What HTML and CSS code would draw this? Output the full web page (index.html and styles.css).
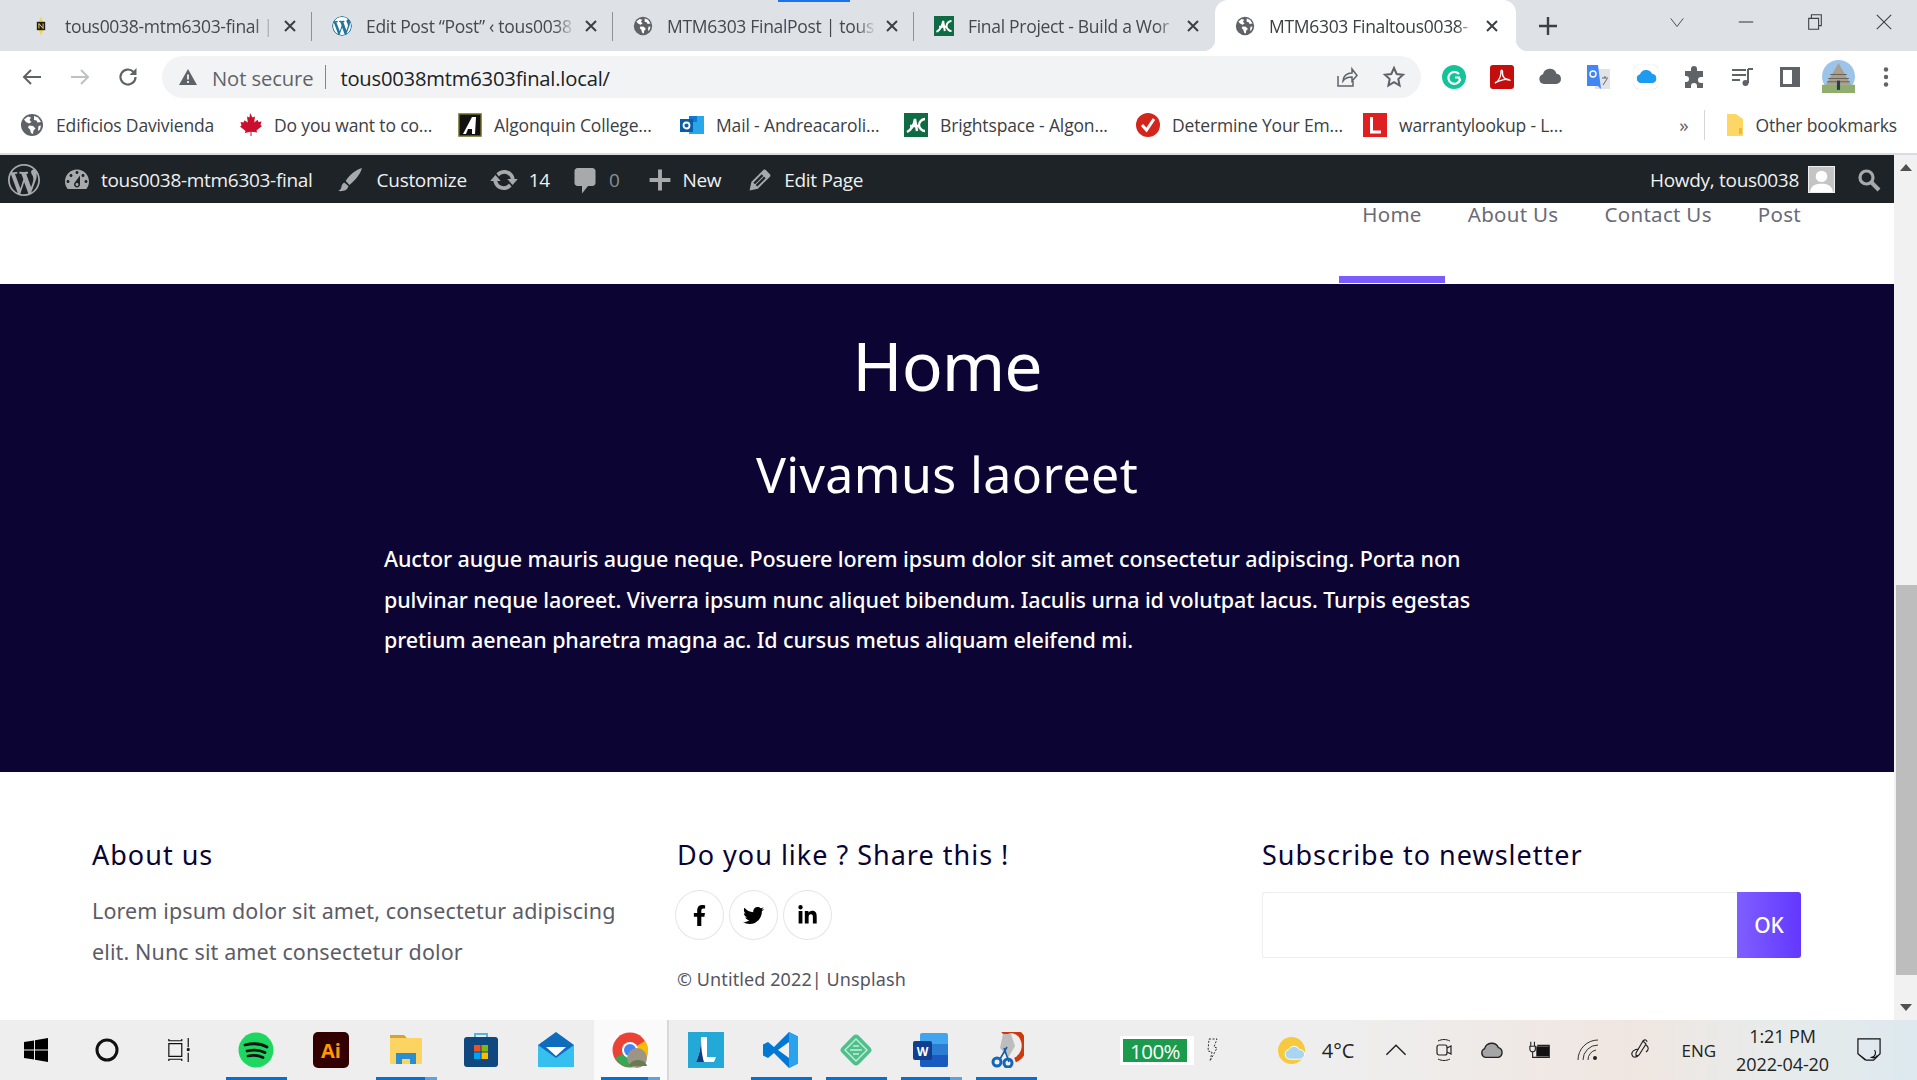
FILE: index.html
```html
<!DOCTYPE html>
<html lang="en">
<head>
<meta charset="utf-8">
<title>MTM6303 Final</title>
<link rel="stylesheet" href="styles.css">
</head>
<body>
<svg class="defs" aria-hidden="true">
  <symbol id="globe" viewBox="0 0 24 24"><circle cx="12" cy="12" r="11" fill="#5f6368"/><path fill="#fff" d="M4 6.500 8 3.500l3 1-1.500 2.500 2 2-2.500 1.500-3-1.500zM9 12.500l4 .5 2.500 2.500-2 2-.5 3.500-2-1-1-3.500-2-2zM14 3l4 1.500 3 4.500-3.500.5-1-2-2.500-.5zM18.500 13l2.500-.5-1 4-2 1.500z"/></symbol>
  <symbol id="close" viewBox="0 0 14 14"><path d="M2 2l10 10M12 2 2 12" fill="none" stroke="#3c4043" stroke-width="2"/></symbol>
  <symbol id="wp" viewBox="0 0 20 20"><path d="M20 10c0-5.510-4.490-10-10-10C4.480 0 0 4.490 0 10c0 5.520 4.480 10 10 10 5.510 0 10-4.480 10-10zM7.780 15.370L4.370 6.220c.55-.02 1.170-.08 1.170-.08.5-.06.44-1.130-.06-1.110 0 0-1.450.11-2.370.11-.18 0-.37 0-.58-.01C4.120 2.690 6.870 1.110 10 1.110c2.330 0 4.450.87 6.050 2.340-.68-.11-1.650.39-1.650 1.580 0 .74.45 1.360.9 2.100.35.61.55 1.360.55 2.460 0 1.490-1.400 5-1.400 5l-3.030-8.370c.54-.02.82-.17.82-.17.5-.05.44-1.250-.06-1.220 0 0-1.440.12-2.380.12-.87 0-2.330-.12-2.330-.12-.5-.03-.56 1.200-.06 1.220l.92.08 1.260 3.410zM17.410 10c.24-.64.74-1.870.43-4.250.7 1.290 1.050 2.710 1.050 4.250 0 3.290-1.730 6.240-4.400 7.780.97-2.590 1.940-5.200 2.920-7.780zM6.100 18.090C3.120 16.650 1.110 13.530 1.110 10c0-1.300.23-2.480.72-3.590C3.250 10.300 4.670 14.200 6.100 18.090zm4.030-6.630l2.580 6.980c-.86.29-1.760.45-2.710.45-.79 0-1.570-.11-2.290-.33.81-2.380 1.620-4.740 2.420-7.100z"/></symbol>
  <symbol id="ac" viewBox="0 0 24 24"><rect width="24" height="24" fill="#0f6b43"/><path fill="none" stroke="#fff" stroke-width="2.400" d="M3 19c4-2 7-7 8-13l2 12M6 13h9M21 6c-3 0-6 3-6 6s3 6 6 6"/></symbol>
</svg>
<div class="screen">
  <header class="tabstrip">
    <span class="tab-loading"></span>
    <div class="tab">
      <svg class="fav" viewBox="0 0 24 24"><path fill="#f5d547" d="M12 1l5 11-5 11-5-11z"/><rect x="7" y="7" width="10" height="10" fill="#1c1c1c"/><path d="M9.500 9v6M14.500 9v6M9.500 9l5 6" stroke="#f5d547" stroke-width="1.200" fill="none"/></svg>
      <span class="tab-title">tous0038-mtm6303-final |</span>
      <svg class="tab-x"><use href="#close"/></svg>
    </div>
    <div class="tab">
      <svg class="fav fav-wp" viewBox="0 0 20 20"><use href="#wp"/></svg>
      <span class="tab-title">Edit Post “Post” ‹ tous0038</span>
      <svg class="tab-x"><use href="#close"/></svg>
    </div>
    <div class="tab">
      <svg class="fav"><use href="#globe"/></svg>
      <span class="tab-title">MTM6303 FinalPost | tous</span>
      <svg class="tab-x"><use href="#close"/></svg>
    </div>
    <div class="tab tab-last">
      <svg class="fav"><use href="#ac"/></svg>
      <span class="tab-title">Final Project - Build a Wor</span>
      <svg class="tab-x"><use href="#close"/></svg>
    </div>
    <div class="tab tab-active">
      <svg class="fav"><use href="#globe"/></svg>
      <span class="tab-title">MTM6303 Finaltous0038-</span>
      <svg class="tab-x"><use href="#close"/></svg>
    </div>
    <svg class="new-tab" viewBox="0 0 20 20"><path d="M10 1v18M1 10h18" stroke="#3c4043" stroke-width="2.400" fill="none"/></svg>
    <div class="win-controls">
      <svg viewBox="0 0 20 20"><path d="M3 6l7 9 7-9" fill="none" stroke="#3c4043"/></svg>
      <svg viewBox="0 0 20 20"><path d="M2 10h16" fill="none" stroke="#3c4043" stroke-width="1.200"/></svg>
      <svg viewBox="0 0 20 20"><path d="M3 6h11v12H3zM6 6V2h11v12h-3" fill="none" stroke="#3c4043" stroke-width="1.200"/></svg>
      <svg viewBox="0 0 20 20"><path d="M2 2l16 16M18 2 2 18" fill="none" stroke="#3c4043" stroke-width="1.200"/></svg>
    </div>
  </header>

  <nav class="toolbar">
    <div class="nav-btns">
      <svg viewBox="0 0 24 24"><path d="M21 12H4M11 5l-7 7 7 7" fill="none" stroke="#5f6368" stroke-width="2"/></svg>
      <svg viewBox="0 0 24 24"><path d="M3 12h17M13 5l7 7-7 7" fill="none" stroke="#bdc1c6" stroke-width="2"/></svg>
      <svg viewBox="0 0 24 24"><path d="M19.500 12a7.500 7.500 0 1 1-2.200-5.300" fill="none" stroke="#5f6368" stroke-width="2.200"/><path d="M20.500 3v7h-7z" fill="#5f6368"/></svg>
    </div>
    <div class="omnibox">
      <svg class="warn" viewBox="0 0 20 20"><path d="M10 2 19 18H1z" fill="#5f6368"/><path d="M10 7.500v5M10 14v2" stroke="#f1f3f4" stroke-width="1.800"/></svg>
      <span class="not-secure">Not secure</span>
      <span class="omni-sep"></span>
      <span class="url">tous0038mtm6303final.local/</span>
      <svg class="omni-icon share" viewBox="0 0 24 24"><path d="M4 11v10h15v-5M9 16c0-5 4-8 9-8V4l5 6.500L18 16v-4c-4 0-7 1-9 4z" fill="none" stroke="#5f6368" stroke-width="1.500"/></svg>
      <svg class="omni-icon star" viewBox="0 0 24 24"><path d="M12 3l2.700 6 6.300.7-4.700 4.300 1.300 6.500L12 17.200 6.400 20.500l1.300-6.500L3 9.700 9.300 9z" fill="none" stroke="#5f6368" stroke-width="2"/></svg>
    </div>
    <div class="ext-row">
      <span class="ext"><svg viewBox="0 0 24 24"><circle cx="12" cy="12" r="12" fill="#15c39a"/><path d="M17 9a6 6 0 1 0 1 6l-1-2.500h-4" fill="none" stroke="#fff" stroke-width="2.200"/></svg></span>
      <span class="ext"><svg viewBox="0 0 24 24"><rect width="24" height="24" rx="3" fill="#c40e0e"/><path d="M5 18c4-2 6-7 6-11 0-3 2-2 1.500 1-.5 4 3 7 7 7 0 0-1.500-1.500-5-.5-3 .8-6 1.500-9.500 3.500z" fill="none" stroke="#fff" stroke-width="1.400"/></svg></span>
      <span class="ext"><svg viewBox="0 0 24 24"><path d="M6 19a5 5 0 0 1-1-9.800 7 7 0 0 1 13.500-.5A5.200 5.200 0 0 1 18.500 19z" fill="#5f6368"/></svg></span>
      <span class="ext"><svg viewBox="0 0 24 24"><rect x="9" y="4" width="15" height="20" fill="#e1e3e6"/><path d="M1 0h11l3 24-3-3H1z" fill="#4285f4"/><circle cx="7" cy="9" r="3" fill="none" stroke="#fff" stroke-width="1.400"/><path d="M16 13h6M19 11v2M17 20l4-6" stroke="#5f6368" fill="none"/></svg></span>
      <span class="ext ext-icloud"><svg viewBox="0 0 24 24"><path d="M7 18a4.500 4.500 0 0 1-1-8.800 6.500 6.500 0 0 1 12-.5 4.700 4.700 0 0 1 .5 9.300z" fill="#1d9bf0"/></svg></span>
      <span class="ext"><svg viewBox="0 0 24 24"><path d="M9 4a3 3 0 0 1 6 0v2h6v6h-2a3 3 0 0 0 0 6h2v5h-6v-2a3 3 0 0 0-6 0v2H3v-6h1a3 3 0 0 0 0-6H3V6h6z" fill="#5f6368"/></svg></span>
      <span class="ext"><svg viewBox="0 0 24 24"><path d="M2 5h14M2 10h14M2 15h8" stroke="#5f6368" stroke-width="2" fill="none"/><path d="M18 4h5M18 4v14" stroke="#5f6368" stroke-width="2" fill="none"/><circle cx="15.500" cy="18" r="3" fill="#5f6368"/></svg></span>
      <span class="ext"><svg viewBox="0 0 24 24"><path d="M2 2h20v20H2z" fill="#5f6368"/><rect x="5" y="5" width="9" height="14" fill="#fff"/></svg></span>
      <span class="ext"><svg class="avatar" viewBox="0 0 32 32"><circle cx="16" cy="16" r="16" fill="#9cc4e8"/><path d="M0 24h32v8H0z" fill="#8fae6b"/><path d="M16 3 28 24H4z" fill="#a8a08e"/><path d="M8 14h16M6 18h20M5 21h22" stroke="#6b6455"/><rect x="14.500" y="20" width="3" height="9" fill="#2b3a55"/></svg></span>
      <span class="ext"><svg viewBox="0 0 24 24"><circle cx="12" cy="4.500" r="2.200" fill="#5f6368"/><circle cx="12" cy="12" r="2.200" fill="#5f6368"/><circle cx="12" cy="19.500" r="2.200" fill="#5f6368"/></svg></span>
    </div>
  </nav>

  <div class="bookmarks">
    <div class="bm-list">
      <div class="bm"><svg><use href="#globe"/></svg><span>Edificios Davivienda</span></div>
      <div class="bm"><svg viewBox="0 0 24 24"><path fill="#c8102e" d="M12 0l2.500 4.500 2.500-1-.8 6 3.300-2.800 1 2.300 3-.5-1 3.500 1.500 1-5.500 4.500.7 2-5.700-.8v4.300h-1v-4.300L6.800 20l.7-2L2 13.500l1.500-1-1-3.500 3 .5 1-2.300L9.800 9.500 9 3.500l2.500 1z"/></svg><span>Do you want to co...</span></div>
      <div class="bm"><svg viewBox="0 0 24 24"><rect x="1" y="1" width="22" height="22" fill="#111" stroke="#6b6b1e" stroke-width="1.500"/><path d="M5 21 14 4h4l-1 17h-3v-5h-4l-2 5z" fill="#fff"/></svg><span>Algonquin College...</span></div>
      <div class="bm"><svg viewBox="0 0 24 24"><rect x="9" y="3" width="15" height="18" fill="#28a8ea"/><rect x="9" y="3" width="8" height="6" fill="#0f78d4"/><rect x="0" y="6" width="13" height="13" fill="#0a5ea8"/><circle cx="6.500" cy="12.500" r="3" fill="none" stroke="#fff" stroke-width="1.800"/></svg><span>Mail - Andreacaroli...</span></div>
      <div class="bm"><svg><use href="#ac"/></svg><span>Brightspace - Algon...</span></div>
      <div class="bm"><svg viewBox="0 0 24 24"><circle cx="12" cy="12" r="12" fill="#d2261c"/><path d="M6 12l4.500 5L18 6" fill="none" stroke="#fff" stroke-width="3"/></svg><span>Determine Your Em...</span></div>
      <div class="bm"><svg viewBox="0 0 24 24"><rect width="24" height="24" fill="#e02020"/><path d="M8.500 4v15H18" fill="none" stroke="#fff" stroke-width="3"/></svg><span>warrantylookup - L...</span></div>
    </div>
    <div class="bm-more">
      <span class="chev">»</span>
      <span class="bm-sep"></span>
      <div class="bm"><svg class="bm-folder" viewBox="0 0 18 24"><path d="M1 1h9l7 5v17H1z" fill="#fdd663"/><rect x="13" y="15" width="3" height="6" fill="#e6b93f"/></svg><span>Other bookmarks</span></div>
    </div>
  </div>

  <div class="viewport">
    <div class="page">
      <div class="adminbar">
        <div class="ab-group">
          <svg class="ab-icon ab-wp" viewBox="0 0 20 20"><use href="#wp"/></svg>
          <span class="ab-item">
            <svg class="ab-icon" viewBox="0 0 20 20"><path d="M3.760 16h12.480c1.100-1.370 1.760-3.110 1.760-5 0-4.420-3.580-8-8-8s-8 3.580-8 8c0 1.890.66 3.630 1.760 5zM10 4c.55 0 1 .45 1 1s-.45 1-1 1-1-.45-1-1 .45-1 1-1zM6 6c.55 0 1 .45 1 1s-.45 1-1 1-1-.45-1-1 .45-1 1-1zm8 0c.55 0 1 .45 1 1s-.45 1-1 1-1-.45-1-1 .45-1 1-1zm-5.370 5.550L12 7v6c0 1.100-.9 2-2 2s-2-.9-2-2c0-.57.24-1.080.63-1.450zM4 10c.55 0 1 .45 1 1s-.45 1-1 1-1-.45-1-1 .45-1 1-1zm12 0c.55 0 1 .45 1 1s-.45 1-1 1-1-.45-1-1 .45-1 1-1zm-5 3c0-.55-.45-1-1-1s-1 .45-1 1 .45 1 1 1 1-.45 1-1z"/></svg>
            tous0038-mtm6303-final
          </span>
          <span class="ab-item ab-customize">
            <svg class="ab-icon ab-small" viewBox="0 0 24 24"><path d="M23 1c-5 1-12 7-15 12l3.500 3.500C16.500 13 22 6 23 1zM7 14.500c-3 .5-2.500 4-3.500 5.500-.5.8-1.500 1.500-2.500 2 4 1 9-.5 9.500-4.500z"/></svg>
            Customize
          </span>
          <span class="ab-item ab-updates">
            <svg class="ab-icon" viewBox="0 0 20 20"><path d="M10.200 3.280c3.530 0 6.430 2.610 6.920 6h2.080l-3.500 4-3.500-4h2.320c-.45-1.970-2.210-3.450-4.320-3.450-1.450 0-2.730.71-3.540 1.780L4.950 5.660C6.230 4.200 8.110 3.280 10.200 3.280zm-.4 13.440c-3.520 0-6.430-2.610-6.920-6H.8l3.500-4c1.170 1.330 2.330 2.670 3.500 4H5.480c.45 1.970 2.210 3.450 4.320 3.450 1.450 0 2.730-.71 3.540-1.780l1.710 1.950c-1.280 1.460-3.150 2.380-5.250 2.380z"/></svg>
            14
          </span>
          <span class="ab-item ab-muted">
            <svg class="ab-icon" viewBox="0 0 20 20"><path d="M5 2h10c1.100 0 2 .9 2 2v8c0 1.100-.9 2-2 2h-3l-4 5v-5H5c-1.100 0-2-.9-2-2V4c0-1.100.9-2 2-2z"/></svg>
            0
          </span>
          <span class="ab-item">
            <svg class="ab-icon ab-small" viewBox="0 0 20 20"><path d="M18 8.500v3h-6.500V18h-3v-6.500H2v-3h6.500V2h3v6.500z"/></svg>
            New
          </span>
          <span class="ab-item">
            <svg class="ab-icon" viewBox="0 0 20 20"><path d="M13.890 3.390l2.710 2.720c.46.46.42 1.240.03 1.640l-8.010 8.020-5.560 1.160 1.160-5.580s7.600-7.630 7.990-8.030c.39-.39 1.220-.39 1.680.07zm-2.730 2.790l-5.590 5.610 1.110 1.110 5.540-5.650zm-2.970 8.230l5.580-5.600-1.070-1.080-5.590 5.600z"/></svg>
            Edit Page
          </span>
        </div>
        <div class="ab-right">
          <span>Howdy, tous0038</span>
          <svg class="ab-avatar" viewBox="0 0 26 26"><rect x=".5" y=".5" width="25" height="25" fill="#c4c4c4" stroke="#eee"/><circle cx="13" cy="10" r="5.500" fill="#fff"/><path d="M2 25c1-7 6-8 11-8s10 1 11 8z" fill="#fff"/></svg>
          <svg class="ab-search" viewBox="0 0 24 24"><circle cx="9.500" cy="9.500" r="6.500" fill="none" stroke="#a7aaad" stroke-width="3.200"/><path d="M14.500 14.500 22 22" stroke="#a7aaad" stroke-width="4"/></svg>
        </div>
      </div>

      <div class="sitenav">
        <a class="nav-link nav-current">Home</a>
        <a class="nav-link">About Us</a>
        <a class="nav-link">Contact Us</a>
        <a class="nav-link">Post</a>
      </div>

      <section class="hero">
        <h1>Home</h1>
        <h2>Vivamus laoreet</h2>
        <p>Auctor augue mauris augue neque. Posuere lorem ipsum dolor sit amet consectetur adipiscing. Porta non<br>pulvinar neque laoreet. Viverra ipsum nunc aliquet bibendum. Iaculis urna id volutpat lacus. Turpis egestas<br>pretium aenean pharetra magna ac. Id cursus metus aliquam eleifend mi.</p>
      </section>

      <footer class="footer">
        <div class="fcol">
          <h3>About us</h3>
          <p class="flead">Lorem ipsum dolor sit amet, consectetur adipiscing elit. Nunc sit amet consectetur dolor</p>
        </div>
        <div class="fcol">
          <h3>Do you like ? Share this !</h3>
          <div class="socials">
            <span class="social"><svg viewBox="0 0 320 512"><path d="M279.140 288l14.220-92.660h-88.910v-60.130c0-25.350 12.420-50.060 52.240-50.060h40.420V6.260S260.430 0 225.360 0c-73.220 0-121.080 44.380-121.080 124.720v70.620H22.890V288h81.390v224h100.170V288z"/></svg></span>
            <span class="social"><svg viewBox="0 0 512 512"><path d="M459.370 151.716c.325 4.548.325 9.097.325 13.645 0 138.720-105.583 298.558-298.558 298.558-59.452 0-114.680-17.219-161.137-47.106 8.447.974 16.568 1.299 25.340 1.299 49.055 0 94.213-16.568 130.274-44.832-46.132-.975-84.792-31.188-98.112-72.772 6.498.974 12.995 1.624 19.818 1.624 9.421 0 18.843-1.300 27.614-3.573-48.081-9.747-84.143-51.980-84.143-102.985v-1.299c13.969 7.797 30.214 12.670 47.431 13.319-28.264-18.843-46.781-51.005-46.781-87.391 0-19.492 5.197-37.360 14.294-52.954 51.655 63.675 129.300 105.258 216.365 109.807-1.624-7.797-2.599-15.918-2.599-24.040 0-57.828 46.782-104.934 104.934-104.934 30.213 0 57.502 12.670 76.670 33.137 23.715-4.548 46.456-13.320 66.599-25.340-7.798 24.366-24.366 44.833-46.132 57.827 21.117-2.273 41.584-8.122 60.426-16.243-14.292 20.791-32.161 39.308-52.628 54.253z"/></svg></span>
            <span class="social"><svg viewBox="0 0 448 512"><path d="M100.280 448H7.400V148.900h92.880zM53.790 108.100C24.090 108.100 0 83.500 0 53.800a53.790 53.790 0 0 1 107.580 0c0 29.700-24.100 54.300-53.790 54.300zM447.900 448h-92.680V302.400c0-34.700-.7-79.200-48.290-79.200-48.290 0-55.690 37.700-55.690 76.700V448h-92.780V148.900h89.080v40.800h1.300c12.400-23.500 42.690-48.300 87.880-48.300 94 0 111.280 61.900 111.280 142.300V448z"/></svg></span>
          </div>
          <p class="copyright">© Untitled 2022| Unsplash</p>
        </div>
        <div class="fcol">
          <h3>Subscribe to newsletter</h3>
          <form class="subscribe">
            <input class="sub-input" type="text" aria-label="Email">
            <button class="sub-btn" type="button">OK</button>
          </form>
        </div>
      </footer>
    </div>
    <div class="scrollbar">
      <span class="sb-btn"><i class="sb-up"></i></span>
      <span class="sb-track"></span>
      <span class="sb-thumb"></span>
      <span class="sb-gap"></span>
      <span class="sb-btn"><i class="sb-down"></i></span>
    </div>
  </div>

  <div class="taskbar">
    <div class="tb-start">
      <span class="tb-sys"><svg viewBox="0 0 24 24"><path d="M0 4l10-1.500V11.500H0zM11 2.300 24 0v11.500H11zM0 12.500h10v9L0 20zM11 12.500h13V24l-13-2.300z" fill="#000"/></svg></span>
      <span class="tb-sys"><svg viewBox="0 0 24 24"><circle cx="12" cy="12" r="10" fill="none" stroke="#111" stroke-width="3"/></svg></span>
      <span class="tb-sys"><svg viewBox="0 0 26 26"><path d="M2 1v2h14V1M2 6h14v14H2zM2 25v-2h14v2M23 0v10M23 16v10" fill="none" stroke="#111" stroke-width="1.300"/><rect x="21.500" y="11" width="3" height="3" fill="#111"/></svg></span>
    </div>
    <div class="tb-apps">
      <span class="tb-app tb-open"><svg viewBox="0 0 36 36"><ellipse cx="18" cy="18" rx="17.500" ry="17.500" fill="#1ed760"/><path d="M7 13c8-2 15-2 22 2M9 19c6-1.500 12-1.500 18 1.500M10 24c5-1 10-1 15 1.500" fill="none" stroke="#111" stroke-width="2.800" stroke-linecap="round"/></svg></span>
      <span class="tb-app"><svg viewBox="0 0 36 36"><rect width="36" height="36" rx="5" fill="#330000"/><text class="ai-txt" x="18" y="26">Ai</text></svg></span>
      <span class="tb-app tb-open tb-multi"><svg viewBox="0 0 36 36"><path d="M2 3h14l3 3h-17z" fill="#d8a22c"/><rect x="2" y="6" width="32" height="26" rx="1" fill="#fcd462"/><path d="M8 32V21h20v11h-6v-5h-8v5z" fill="#2a8ed0"/></svg></span>
      <span class="tb-app"><svg viewBox="0 0 36 36"><path d="M12 6V2h12v4" fill="none" stroke="#4fb6e6" stroke-width="2"/><rect x="1" y="5" width="34" height="30" rx="3" fill="#11477f"/><rect x="11" y="13" width="6.500" height="6.500" fill="#f25022"/><rect x="18.500" y="13" width="6.500" height="6.500" fill="#7fba00"/><rect x="11" y="20.500" width="6.500" height="6.500" fill="#00a4ef"/><rect x="18.500" y="20.500" width="6.500" height="6.500" fill="#ffb900"/></svg></span>
      <span class="tb-app"><svg viewBox="0 0 36 36"><path d="M0 13 18 0l18 13v22H0z" fill="#0f6cbd"/><path d="M0 13l18 13 18-13v22H0z" fill="#35c0f0"/><path d="M8 15h20l-10 9z" fill="#fff"/></svg></span>
      <span class="tb-app tb-open tb-multi tb-chrome"><svg viewBox="0 0 36 36"><circle cx="18" cy="18" r="17.500" fill="#ea4335"/><path d="M18 18 33 26a17 17 0 0 1-30 0z" fill="#34a853"/><path d="M18 18 33 9a17 17 0 0 1-2 22z" fill="#fbbc05"/><circle cx="18" cy="18" r="8" fill="#fff"/><circle cx="18" cy="18" r="6" fill="#4285f4"/><circle cx="25" cy="26" r="10" fill="#9c9484"/><path d="M17 34c2-8 16-8 18 0z" fill="#6b7b50"/></svg></span>
      <span class="tb-app"><svg viewBox="0 0 36 36"><rect width="36" height="36" fill="#23a9d8"/><path d="M13 5h6v20h9l-2 5H8c3-6 5-14 5-25z" fill="#fff"/><path d="M13 5c0 11-2 19-5 25h8c-2-6-3-14-3-25z" fill="#123b80"/></svg></span>
      <span class="tb-app tb-open"><svg viewBox="0 0 36 36"><path d="M26 0l9 4.500v27L26 36 11 21l-6 5-5-2.500V12.500L5 10l6 5z" fill="#0078d4"/><path d="M26 0l9 4.500v27L26 36z" fill="#2aa3ef"/><path d="M26 10 15 18l11 8z" fill="#f0f0f0"/></svg></span>
      <span class="tb-app tb-open"><svg viewBox="0 0 36 36"><rect x="6" y="6" width="24" height="24" rx="4" transform="rotate(45 18 18)" fill="#4fbf8b"/><path d="M18 7 29 18 18 29 7 18z M12 18h12M15 14l6 0M15 22h6" fill="none" stroke="#c4efd9" stroke-width="1.400"/></svg></span>
      <span class="tb-app tb-open tb-multi"><svg viewBox="0 0 36 36"><rect x="7" y="1" width="28" height="34" rx="2" fill="#41a5ee"/><rect x="7" y="12" width="28" height="11" fill="#2b7cd3"/><path d="M7 23h28v10a2 2 0 0 1-2 2H9a2 2 0 0 1-2-2z" fill="#185abd"/><rect y="9" width="19" height="19" rx="2" fill="#103f91"/><text class="w-txt" x="9.500" y="24">W</text></svg></span>
      <span class="tb-app tb-open"><svg viewBox="0 0 36 36"><path d="M15 2a13 15 0 1 1 12 26" fill="none" stroke="#cc3b10" stroke-width="5"/><path d="M15 2l-3 14 8 10 7-12-4-12z" fill="#bdbdbd"/><path d="M12 27l7-12M21 30l-5-14" stroke="#0e5aa7" stroke-width="1.500"/><circle cx="9" cy="30" r="4" fill="none" stroke="#1566b7" stroke-width="3"/><circle cx="20" cy="31" r="4" fill="none" stroke="#1566b7" stroke-width="3"/></svg></span>
    </div>
    <div class="batt-widget"><span class="batt-fill">100%</span></div>
    <svg class="batt-bolt" viewBox="0 0 12 24"><path d="M3 1h8L8 9l3 1-7 13 2-9-4-1z" fill="none" stroke="#333" stroke-dasharray="2 1.500"/></svg>
    <div class="tray">
      <span class="weather">
        <svg viewBox="0 0 30 30"><circle cx="14" cy="15" r="14" fill="#f7c93e"/><path d="M12 24a5 5 0 0 1-1-9.800 6 6 0 0 1 11-.2 5 5 0 0 1 1 10z" fill="#a9d4f2" stroke="#fff"/></svg>
        4°C
      </span>
      <span class="tray-cell"><svg viewBox="0 0 20 20"><path d="M2 14l8-8 8 8" fill="none" stroke="#222" stroke-width="1.200"/></svg></span>
      <span class="tray-cell"><svg viewBox="0 0 20 24"><path d="M4 3c4-2 8-2 12 0M4 21c4 2 8 2 12 0" fill="none" stroke="#222"/><rect x="3" y="7" width="10" height="10" rx="2" fill="none" stroke="#222" stroke-width="1.200"/><path d="M13 10l4-2v8l-4-2" fill="none" stroke="#222" stroke-width="1.200"/></svg></span>
      <span class="tray-cell"><svg viewBox="0 0 26 20"><path d="M6 18a5 5 0 0 1-1-9.500 8 8 0 0 1 15-1 5.500 5.500 0 0 1 0 10.500z" fill="#a5a5a5" stroke="#222" stroke-width="1.500"/></svg></span>
      <span class="tray-cell"><svg viewBox="0 0 26 20"><path d="M3 1v5M7 1v5M2 6h6v3a3 3 0 0 1-6 0zM5 12v6h18V5H10" fill="none" stroke="#222" stroke-width="1.200"/><rect x="9" y="6" width="14" height="11" fill="#111"/></svg></span>
      <span class="tray-cell"><svg viewBox="0 0 24 24"><path d="M2 22A20 20 0 0 1 22 2M7 22A15 15 0 0 1 22 7M12 22A10 10 0 0 1 20 12" fill="none" stroke="#333"/><circle cx="19" cy="20" r="2" fill="#222"/></svg></span>
      <span class="tray-cell tray-pen"><svg viewBox="0 0 24 24"><path d="M14 3l3 3-7 11-3 1v-3zM14 3c2-2 4-1 4 1M10 11c-5 0-8 3-7 6s5 3 7 0M17 7c3 2 3 5 0 7" fill="none" stroke="#222" stroke-width="1.100"/></svg></span>
      <span class="tray-lang">ENG</span>
      <span class="clock"><span>1:21 PM</span><span>2022-04-20</span></span>
      <svg class="notif" viewBox="0 0 26 26"><path d="M1 1h24v16l-7 7H10l-9-7z M1 17l8 7" fill="none" stroke="#111" stroke-width="1.300"/><path d="M19 13a5 5 0 0 1-3 8 5 5 0 0 0 6-2" fill="none" stroke="#111" stroke-width="1.300"/></svg>
    </div>
  </div>
</div>
</body>
</html>
```

FILE: styles.css
```css
* { box-sizing: border-box; }
html, body { margin: 0; padding: 0; overflow: hidden; }
body { background: #fff; font-family: "Open Sans", "Noto Sans", sans-serif; }
.defs { display: none; }
.screen { width: 1917px; height: 1080px; display: flex; flex-direction: column; overflow: hidden; }

/* Tab strip */
.tabstrip { position: relative; height: 51px; flex: none; background: #dee1e6; display: flex; padding-left: 11px; }
.tab-loading { position: absolute; left: 778px; top: 0; width: 72px; height: 2px; background: #1a73e8; }
.tab { flex: 0 0 301px; min-width: 0; height: 51px; display: flex; align-items: center; padding: 0 15px 0 20px; position: relative; }
.tab::after { content: ""; position: absolute; right: 0; top: 12px; height: 29px; width: 1px; background: #8e9196; }
.tab-last::after { display: none; }
.fav { width: 20px; height: 20px; flex: none; }
.fav-wp { fill: #21759b; background: #fff; border-radius: 50%; }
.tab-title { flex: 1; margin: 0 8px 0 14px; min-width: 0; white-space: nowrap; font-size: 17.500px; letter-spacing: -0.3px; color: #45494e; -webkit-mask-image: linear-gradient(90deg, #000 90%, transparent 100%); mask-image: linear-gradient(90deg, #000 90%, transparent 100%); }
.tab-x { width: 14px; height: 14px; flex: none; }
.tab-active { background: #fff; border-radius: 13px 13px 0 0; padding-right: 17px; }
.tab-active .tab-title { color: #3c4043; }
.tab-active::before, .tab-active::after { content: ""; position: absolute; bottom: 0; top: auto; width: 12px; height: 12px; background: radial-gradient(circle at 0 0, transparent 12px, #fff 12.500px); }
.tab-active::before { left: -12px; }
.tab-active::after { right: -12px; background: radial-gradient(circle at 100% 0, transparent 12px, #fff 12.500px); }
.new-tab { width: 20px; height: 20px; align-self: center; margin-left: 22px; flex: none; }
.win-controls { margin-left: auto; margin-right: -1.500px; display: flex; align-items: flex-start; }
.win-controls svg { width: 18px; height: 18px; margin: 13px 25.500px 0; flex: none; }

/* Toolbar */
.toolbar { height: 51px; flex: none; background: #fff; display: flex; align-items: center; }
.nav-btns { display: flex; width: 162px; padding-left: 20px; gap: 24px; flex: none; }
.nav-btns svg { width: 24px; height: 24px; flex: none; }
.omnibox { width: 1259px; height: 42px; flex: none; border-radius: 21px; background: #f1f3f4; display: flex; align-items: center; padding-left: 16px; }
.warn { width: 20px; height: 20px; flex: none; }
.not-secure { margin-left: 14px; padding-top: 3px; font-size: 20.200px; letter-spacing: -0.1px; color: #5f6368; }
.omni-sep { width: 1px; height: 24px; margin: 0 14px 0 12px; background: #80868b; flex: none; }
.url { padding-top: 3px; font-size: 20.200px; letter-spacing: -0.2px; color: #202124; }
.omni-icon { width: 24px; height: 24px; flex: none; }
.share { margin-left: auto; margin-right: 24px; }
.star { margin-right: 15px; }
.ext-row { display: flex; margin-left: 9px; }
.ext { width: 48px; height: 40px; display: flex; align-items: center; justify-content: center; }
.ext svg { width: 24px; height: 24px; }
.ext svg.avatar { width: 33px; height: 33px; }
.ext-icloud svg { background: #fff; border-radius: 5px; box-shadow: 0 0 1px #bbb; }

/* Bookmarks */
.bookmarks { height: 51px; flex: none; background: #fff; display: flex; align-items: center; justify-content: space-between; padding: 0 20px 5px; }
.bm-list { display: grid; grid-template-columns: 218px 220px 222px 224px 232px 227px 220px; }
.bm { display: flex; align-items: center; gap: 12px; font-size: 17.500px; letter-spacing: -0.15px; color: #3c4043; white-space: nowrap; }
.bm svg { width: 24px; height: 24px; flex: none; }
.bm svg.bm-folder { width: 18px; }
.bm-more { display: flex; align-items: center; }
.chev { font-size: 19px; color: #5f6368; }
.bm-sep { width: 1px; height: 30px; background: #d4d6d9; margin: 0 21px 0 15px; }

/* Viewport */
.viewport { flex: 1; min-height: 0; display: flex; border-top: 2px solid #d9dbde; }
.page { flex: 1; min-width: 0; display: flex; flex-direction: column; }
.scrollbar { width: 23px; flex: none; background: #f1f1f1; display: flex; flex-direction: column; }
.sb-btn { height: 25px; flex: none; display: flex; align-items: center; justify-content: center; }
.sb-up { border: 6px solid transparent; border-bottom: 7px solid #505050; border-top: 0; }
.sb-down { border: 6px solid transparent; border-top: 7px solid #505050; border-bottom: 0; }
.sb-track { flex: 1; }
.sb-thumb { height: 390px; margin-left: 2px; flex: none; background: #bdbdbd; }
.sb-gap { height: 20px; flex: none; }

/* Admin bar */
.adminbar { height: 48px; flex: none; background: #1d2327; color: #f0f0f1; display: flex; justify-content: space-between; align-items: center; font-size: 19px; letter-spacing: -0.3px; padding: 1px 13px 0 0; }
.ab-group { display: flex; align-items: center; }
.ab-icon { fill: #a7aaad; width: 30px; height: 30px; flex: none; }
.ab-small { width: 26px; height: 26px; }
.ab-wp { width: 32px; height: 32px; margin: 0 22px 0 8px; }
.ab-item { display: flex; align-items: center; gap: 9px; margin-right: 24px; white-space: nowrap; }
.ab-customize { gap: 14px; margin-right: 22px; }
.ab-updates { gap: 10px; margin-right: 20px; }
.ab-muted { color: #8c8f94; margin-right: 28px; }
.ab-right { display: flex; align-items: center; }
.ab-avatar { width: 27px; height: 27px; margin: 0 22px 0 9px; }
.ab-search { width: 24px; height: 24px; }

/* Site nav */
.sitenav { height: 81px; flex: none; background: #fff; display: flex; justify-content: flex-end; padding-right: 70px; padding-bottom: 1px; font-family: "Noto Sans", sans-serif; }
.nav-link { padding: 0 23px; height: 80px; font-size: 20.500px; line-height: 22px; letter-spacing: 0.3px; color: #6b6b76; border-bottom: 7px solid transparent; }
.nav-current { border-bottom-color: #7d5cff; }

/* Hero */
.hero { height: 488px; flex: none; background: #0c0533; color: #fff; text-align: center; font-family: "Noto Sans", sans-serif; padding-top: 41px; }
.hero h1 { margin: 0; font-size: 68px; line-height: 80px; font-weight: 400; letter-spacing: -1px; }
.hero h2 { margin: 39px 0 0; font-size: 50px; line-height: 60px; font-weight: 400; letter-spacing: 0.4px; }
.hero p { margin: 35px auto 0; width: 1126px; text-align: left; font-size: 21.500px; line-height: 40.500px; font-weight: 500; letter-spacing: -0.1px; }

/* Footer */
.footer { flex: 1; min-height: 0; background: #fff; display: grid; grid-template-columns: repeat(3, 539px); gap: 46px; padding: 65px 0 0 92px; font-family: "Noto Sans", sans-serif; }
.fcol { min-width: 0; }
.fcol h3 { margin: 0; font-size: 27px; line-height: 36px; font-weight: 400; letter-spacing: 1px; color: #0a0433; }
.flead { margin: 17px 0 0; font-size: 21.500px; line-height: 41px; letter-spacing: 0.12px; color: #5c5c66; }
.socials { display: flex; gap: 5px; margin: 17px 0 0 -2px; }
.social { width: 49px; height: 50px; border: 1px solid #e4e4e4; border-radius: 50%; display: flex; align-items: center; justify-content: center; }
.social svg { height: 21px; width: 21px; fill: #000; }
.copyright { margin: 26px 0 0; font-size: 18px; line-height: 26px; letter-spacing: 0.1px; color: #55555f; }
.subscribe { display: flex; margin: 19px 0 0 0; height: 66px; }
.sub-input { flex: 1; min-width: 0; border: 1px solid #eee; border-right: 0; border-radius: 3px 0 0 3px; background: #fff; }
.sub-btn { width: 64px; border: 0; padding: 0; border-radius: 0 3px 3px 0; background: linear-gradient(90deg, #7f5fff, #6238ff); color: #fff; font: 500 21px "Noto Sans", sans-serif; }

/* Taskbar */
.taskbar { height: 60px; flex: none; display: flex; align-items: center; background: linear-gradient(90deg, #eeeeee 0, #eeeeee 70%, #f0e6e1 85%, #e8ebea 92%, #dde9ef 100%); font-family: "Open Sans", sans-serif; color: #222; }
.tb-start { display: flex; flex: none; width: 218.500px; }
.tb-sys { width: 71.500px; display: flex; justify-content: center; flex: none; }
.tb-sys svg { width: 24px; height: 24px; }
.tb-apps { display: flex; flex: none; height: 60px; }
.tb-app { width: 75px; height: 60px; flex: none; display: flex; align-items: center; justify-content: center; position: relative; }
.tb-app svg { width: 36px; height: 36px; }
.tb-open::after { content: ""; position: absolute; left: 7px; right: 7px; bottom: 0; height: 3px; background: #0b6fc9; }
.tb-multi::after { background: linear-gradient(90deg, #0b6fc9 80%, #5fa3dd 80%); }
.tb-chrome { background: #fafafa; border-right: 2px solid #d8d8d8; }
.ai-txt { font: 700 20px "Open Sans", sans-serif; fill: #ff9a00; text-anchor: middle; }
.w-txt { font: 700 12px "Open Sans", sans-serif; fill: #fff; text-anchor: middle; }
.batt-widget { flex: none; margin-left: 76.500px; width: 74px; height: 29px; background: #fff; padding: 3px 7px 3px 3px; }
.batt-fill { display: block; height: 23px; background: #1a9c4c; color: #fff; font-size: 20.500px; line-height: 24px; text-align: center; letter-spacing: -0.5px; }
.batt-bolt { width: 12px; height: 24px; margin-left: 12px; flex: none; }
.tray { display: flex; align-items: center; margin-left: auto; padding-right: 36px; }
.weather { display: flex; align-items: center; gap: 15px; font-size: 20px; margin-right: 18px; }
.weather svg { width: 29px; height: 29px; }
.tray-cell { width: 48px; display: flex; justify-content: center; }
.tray-cell svg { width: 24px; height: 24px; }
.tray-pen { margin-left: 5px; }
.tray-lang { font-size: 17px; margin: 0 20px 0 16px; }
.clock { display: flex; flex-direction: column; align-items: center; font-size: 18px; line-height: 28px; letter-spacing: -0.1px; margin-right: 28px; }
.notif { width: 24px; height: 24px; }
```
